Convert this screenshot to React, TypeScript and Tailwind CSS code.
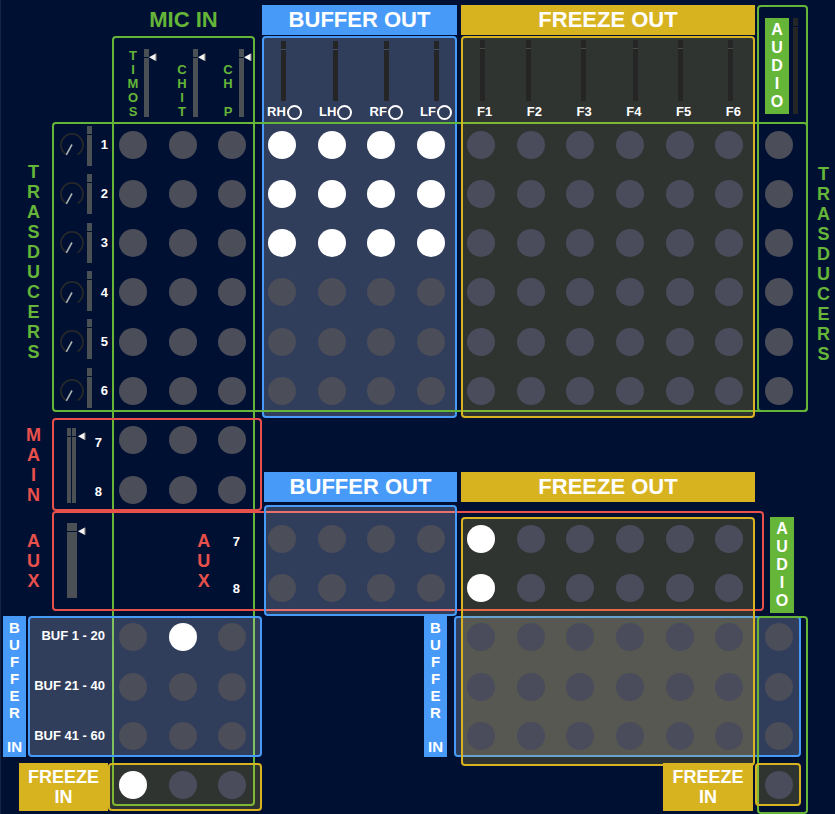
import { useState } from "react";
import clsx from "clsx";

/* ---------- small parts ---------- */

function Stack({ letters, className }: { letters: string[]; className: string }) {
  return (
    <p className={clsx("flex shrink-0 flex-col items-center font-bold", className)}>
      {letters.map((l, i) => (
        <span key={i}>{l || "\u00a0"}</span>
      ))}
    </p>
  );
}

const TRASDUCERS = ["T", "R", "A", "S", "D", "U", "C", "E", "R", "S"];
const AUDIO = ["A", "U", "D", "I", "O"];
const BUFFER_IN = ["B", "U", "F", "F", "E", "R", "", "IN"];

function Frame({ className }: { className: string }) {
  return <div className={clsx("pointer-events-none min-w-0 rounded border-2", className)} />;
}

function Banner({ text, className }: { text: string; className: string }) {
  return (
    <h2
      className={clsx(
        "flex min-w-0 items-center justify-center text-[22px] leading-[30px] font-bold whitespace-nowrap",
        className,
      )}
    >
      {text}
    </h2>
  );
}

/* Vertical fader: the thumb is the thin line that cuts the track. */
function Fader({ label, length, className }: { label: string; length: number; className: string }) {
  return (
    <input
      type="range"
      aria-label={label}
      min={0}
      max={length - 1}
      defaultValue={length - 9}
      className={clsx(
        "m-0 block shrink-0 appearance-none overflow-hidden [writing-mode:vertical-lr] [direction:rtl]",
        "[&::-webkit-slider-thumb]:h-px [&::-webkit-slider-thumb]:w-2.5 [&::-webkit-slider-thumb]:appearance-none",
        className,
      )}
    />
  );
}

const GREY = "bg-[#4b5055] [&::-webkit-slider-thumb]:bg-[#001033]";
const DARK_ON_BLUE = "bg-[#252525] [&::-webkit-slider-thumb]:bg-[#44506a]";
const DARK_ON_OLIVE = "bg-[#252525] [&::-webkit-slider-thumb]:bg-[#464c48]";
const DARK = "bg-[#252525] [&::-webkit-slider-thumb]:bg-[#001033]";

function Pointer() {
  return (
    <svg viewBox="0 0 8 8" className="mt-1 h-2 w-2 shrink-0" aria-hidden="true">
      <path d="M0 4.3 L6.8 0.6 V8 Z" fill="#f4f4f4" />
      <path d="M7.1 0.6 V8" stroke="#8d8478" strokeWidth="0.9" />
    </svg>
  );
}

function Knob({ label }: { label: string }) {
  return (
    <span className="relative block h-6 w-6">
      <svg viewBox="0 0 24 24" className="h-6 w-6" aria-hidden="true">
        <path d="M6.5 21.5 A11 11 0 1 1 17.5 21.5" fill="none" stroke="#262829" strokeWidth="1.8" />
        <path d="M12 11.5 L6.3 21.8" stroke="#aab0b0" strokeWidth="1.6" />
      </svg>
      <input type="range" aria-label={label} className="absolute inset-0 m-0 h-6 w-6 opacity-0" />
    </span>
  );
}

/* ---------- routing matrix ---------- */

const COLS = ["TIMOS", "CHIT", "CH P", "RH", "LH", "RF", "LF", "F1", "F2", "F3", "F4", "F5", "F6", "AUDIO"];
const ROWS = ["1", "2", "3", "4", "5", "6", "MAIN 7", "MAIN 8", "AUX 7", "AUX 8", "BUF 1 - 20", "BUF 21 - 40", "BUF 41 - 60", "FREEZE IN"];

function exists(r: number, c: number) {
  if (r < 6) return true;
  if (r < 8) return c < 3;
  if (r < 10) return c > 2 && c < 13;
  if (r < 13) return c < 3 || c > 6;
  return c < 3 || c === 13;
}

function initiallyOn(r: number, c: number) {
  if (r < 3) return c > 2 && c < 7;
  return ((r === 8 || r === 9) && c === 7) || (r === 10 && c === 1) || (r === 13 && c === 0);
}

function Matrix() {
  const [on, setOn] = useState(() => ROWS.map((_, r) => COLS.map((_, c) => initiallyOn(r, c))));
  const toggle = (r: number, c: number) =>
    setOn((m) => m.map((row, i) => (i === r ? row.map((v, j) => (j === c ? !v : v)) : row)));
  return (
    <div className="col-[7/25] row-[4/19] grid min-w-0 grid-cols-14 grid-rows-14 place-items-center pt-[84px] pr-1 pb-px">
      {ROWS.map((row, r) =>
        COLS.map((col, c) =>
          exists(r, c) ? (
            <input
              key={row + col}
              type="checkbox"
              aria-label={`${col} to ${row}`}
              checked={on[r][c]}
              onChange={() => toggle(r, c)}
              className={clsx(
                "m-0 h-7 w-7 appearance-none rounded-full checked:bg-white",
                r === 13 || (c > 6 && c < 13) ? "bg-[#4a4c5b]" : "bg-[#4b4d59]",
              )}
            />
          ) : (
            <span key={row + col} />
          ),
        ),
      )}
    </div>
  );
}

/* ---------- page ---------- */

const MICS = [
  { name: "TIMOS", letters: ["T", "I", "M", "O", "S"] },
  { name: "CHIT", letters: ["C", "H", "I", "T"] },
  { name: "CH P", letters: ["C", "H", "", "P"] },
];
const BUFFERS = ["RH", "LH", "RF", "LF"];
const FREEZES = ["F1", "F2", "F3", "F4", "F5", "F6"];
const TRANSDUCER_IDS = ["1", "2", "3", "4", "5", "6"];

export default function App() {
  return (
    <main
      className={clsx(
        "grid w-full overflow-hidden bg-[#001033] text-[13px] leading-4 font-bold text-white shadow-[inset_1px_0_0_#14234a]",
        "font-['Liberation_Sans',Arial,sans-serif]",
        "grid-cols-[3fr_16fr_7fr_2fr_24fr_56fr_4fr_143fr_7fr_2fr_160fr_23fr_7fr_3fr_4fr_202fr_90fr_2fr_2fr_7fr_6fr_24fr_7fr_7fr_27fr]",
        "grid-rows-[5px_30px_1px_86px_290px_6px_54px_30px_3px_6px_6px_94px_5px_141px_6px_3px_40px_5px_3px]",
      )}
    >
      {/* outlines and panels, lowest first */}
      <Frame className="col-[8/9] row-[4/18] border-[#65b538]" />
      <Frame className="col-[6/10] row-[7/11] border-[#e8504c]" />
      <Frame className="col-[6/21] row-[11/13] border-[#e8504c]" />
      <Frame className="col-[10/15] row-[4/7] border-[#479af8] bg-[#f2f5ff]/20" />
      <Frame className="col-[11/15] row-[10/14] border-[#479af8] bg-[#f2f5ff]/20" />
      <Frame className="col-[5/10] row-[14/15] border-[#479af8] bg-[#f2f5ff]/20" />
      <Frame className="col-[14/24] row-[14/15] border-[#479af8] bg-[#f2f5ff]/20" />
      <Frame className="col-[6/25] row-[5/6] border-[#65b538]" />
      <Frame className="col-[20/25] row-[2/6] border-[#65b538]" />
      <Frame className="col-[20/25] row-[14/20] border-[#65b538]" />
      <Frame className="col-[16/19] row-[4/7] border-[#d8b320] bg-[#f0ca2e]/20" />
      <Frame className="col-[16/19] row-[12/17] border-[#d8b320] bg-[#f0ca2e]/20" />
      <Frame className="col-[7/10] row-[16/19] border-[#d8b320] bg-[#f0ca2e]/20" />
      <Frame className="col-[19/24] row-[16/18] border-[#d8b320] bg-[#f0ca2e]/20" />

      <Matrix />

      {/* banners */}
      <Banner text="MIC IN" className="col-[8/9] row-[2/3] text-[#65b538]" />
      <Banner text="BUFFER OUT" className="col-[10/15] row-[2/3] bg-[#479af8]" />
      <Banner text="FREEZE OUT" className="col-[16/19] row-[2/3] bg-[#d8b320]" />
      <Banner text="BUFFER OUT" className="col-[11/15] row-[8/9] bg-[#479af8]" />
      <Banner text="FREEZE OUT" className="col-[16/19] row-[8/9] bg-[#d8b320]" />

      {/* microphone channels */}
      <div className="col-[7/9] row-[4/5] grid min-w-0 grid-cols-[49fr_46fr_52fr] pt-[13px] pb-2">
        {MICS.map((m) => (
          <div key={m.name} className="flex min-w-0 pl-4">
            <Stack letters={m.letters} className="w-[18px] justify-end leading-[14px] text-[#65b538]" />
            <Fader label={m.name} length={68} className={clsx("ml-0.5 h-[68px] w-[5px]", GREY)} />
            <Pointer />
          </div>
        ))}
      </div>

      {/* buffer out channels */}
      <div className="col-[10/15] row-[4/5] flex min-w-0 flex-col gap-[3px] pt-[5px]">
        <div className="grid grid-cols-[52fr_51fr_50fr_23fr] pl-[19px]">
          {BUFFERS.map((b) => (
            <Fader key={b} label={b} length={60} className={clsx("h-[60px] w-[5px]", DARK_ON_BLUE)} />
          ))}
        </div>
        <div className="flex justify-between pr-[5px] pl-[5px]">
          {BUFFERS.map((b) => (
            <label key={b} className="flex items-center gap-px">
              {b}
              <input
                type="checkbox"
                className="m-0 h-[15px] w-[15px] appearance-none rounded-full border-2 border-white checked:bg-white"
              />
            </label>
          ))}
        </div>
      </div>

      {/* freeze out channels */}
      <div className="col-[16/19] row-[4/5] flex min-w-0 flex-col gap-[3px] pt-1">
        <div className="grid grid-cols-[46fr_55fr_52fr_45fr_50fr_27fr] pl-[19px]">
          {FREEZES.map((f) => (
            <Fader key={f} label={f} length={61} className={clsx("h-[61px] w-[5px]", DARK_ON_OLIVE)} />
          ))}
        </div>
        <div className="flex justify-between pr-3.5 pl-4">
          {FREEZES.map((f) => (
            <span key={f}>{f}</span>
          ))}
        </div>
      </div>

      {/* audio channel */}
      <div className="col-[20/25] row-[2/5] flex min-w-0 gap-1 pt-[13px] pl-2">
        <Stack letters={AUDIO} className="h-24 w-6 justify-center bg-[#65b538] text-base leading-[18px]" />
        <Fader label="AUDIO" length={96} className={clsx("h-24 w-[5px]", DARK)} />
      </div>
      <div className="col-[22/24] row-[12/14] min-w-0">
        <Stack letters={AUDIO} className="h-24 w-6 justify-center bg-[#65b538] text-base leading-[18px]" />
      </div>

      {/* side titles */}
      <Stack
        letters={TRASDUCERS}
        className="col-[3/6] row-[5/6] min-w-0 pt-10 pr-1 text-lg leading-5 text-[#65b538]"
      />
      <Stack
        letters={TRASDUCERS}
        className="col-[25/26] row-[5/6] min-w-0 pt-[42px] pl-1 text-lg leading-5 text-[#65b538]"
      />
      <Stack
        letters={["M", "A", "I", "N"]}
        className="col-[3/6] row-[7/11] min-w-0 justify-center pr-1 text-lg leading-5 text-[#e8504c]"
      />
      <Stack
        letters={["A", "U", "X"]}
        className="col-[3/6] row-[11/13] min-w-0 justify-center pr-1 text-lg leading-5 text-[#e8504c]"
      />

      {/* transducer strips */}
      <div className="col-[6/8] row-[4/7] grid min-w-0 grid-rows-6 pt-[84px] pr-1 pb-0.5 pl-2">
        {TRANSDUCER_IDS.map((id) => (
          <div key={id} className="flex items-center justify-between">
            <Knob label={`Pan ${id}`} />
            <span>{id}</span>
          </div>
        ))}
      </div>
      <div className="pointer-events-none col-[6/8] row-[5/6] grid min-w-0 grid-rows-6 items-center pl-[35px]">
        {TRANSDUCER_IDS.map((id) => (
          <Fader key={id} label={`Level ${id}`} length={40} className={clsx("pointer-events-auto h-10 w-[5px]", GREY)} />
        ))}
      </div>

      {/* main strip */}
      <div className="col-[6/8] row-[7/11] flex min-w-0 justify-between pr-2.5 pl-[15px]">
        <div className="flex pt-2.5">
          <Fader label="MAIN 7" length={75} className={clsx("h-[75px] w-1", GREY)} />
          <Fader label="MAIN 8" length={75} className={clsx("ml-px h-[75px] w-1", GREY)} />
          <span className="ml-0.5">
            <Pointer />
          </span>
        </div>
        <div className="flex flex-col gap-[33px] pt-[17px]">
          <span>7</span>
          <span>8</span>
        </div>
      </div>

      {/* aux strip */}
      <div className="col-[6/8] row-[11/13] flex min-w-0 pt-3 pl-[15px]">
        <Fader label="AUX" length={75} className={clsx("h-[75px] w-2.5", GREY)} />
        <span className="ml-px">
          <Pointer />
        </span>
      </div>
      <div className="col-[8/9] row-[11/13] flex min-w-0 justify-end gap-[22px] pr-[15px]">
        <Stack letters={["A", "U", "X"]} className="w-3.5 justify-center text-lg leading-5 text-[#e8504c]" />
        <div className="flex flex-col gap-[31px] pt-[23px]">
          <span>7</span>
          <span>8</span>
        </div>
      </div>

      {/* buffer inputs */}
      <Stack letters={BUFFER_IN} className="col-[2/4] row-[14/15] min-w-0 bg-[#479af8] pt-[3px] text-[15px] leading-[17px]" />
      <Stack letters={BUFFER_IN} className="col-[12/13] row-[14/15] min-w-0 bg-[#479af8] pt-[3px] text-[15px] leading-[17px]" />
      <div className="col-[5/8] row-[14/15] flex min-w-0 flex-col gap-8 pt-[11px] pr-[7px] text-right leading-[18px] whitespace-nowrap">
        <span>BUF 1 - 20</span>
        <span>BUF 21 - 40</span>
        <span>BUF 41 - 60</span>
      </div>

      {/* freeze inputs */}
      <h2 className="col-[3/7] row-[16/19] flex min-w-0 flex-col items-center justify-center bg-[#d8b320] text-lg leading-5">
        <span>FREEZE</span>
        <span>IN</span>
      </h2>
      <h2 className="col-[17/18] row-[16/19] flex min-w-0 flex-col items-center justify-center bg-[#d8b320] text-lg leading-5">
        <span>FREEZE</span>
        <span>IN</span>
      </h2>
    </main>
  );
}
